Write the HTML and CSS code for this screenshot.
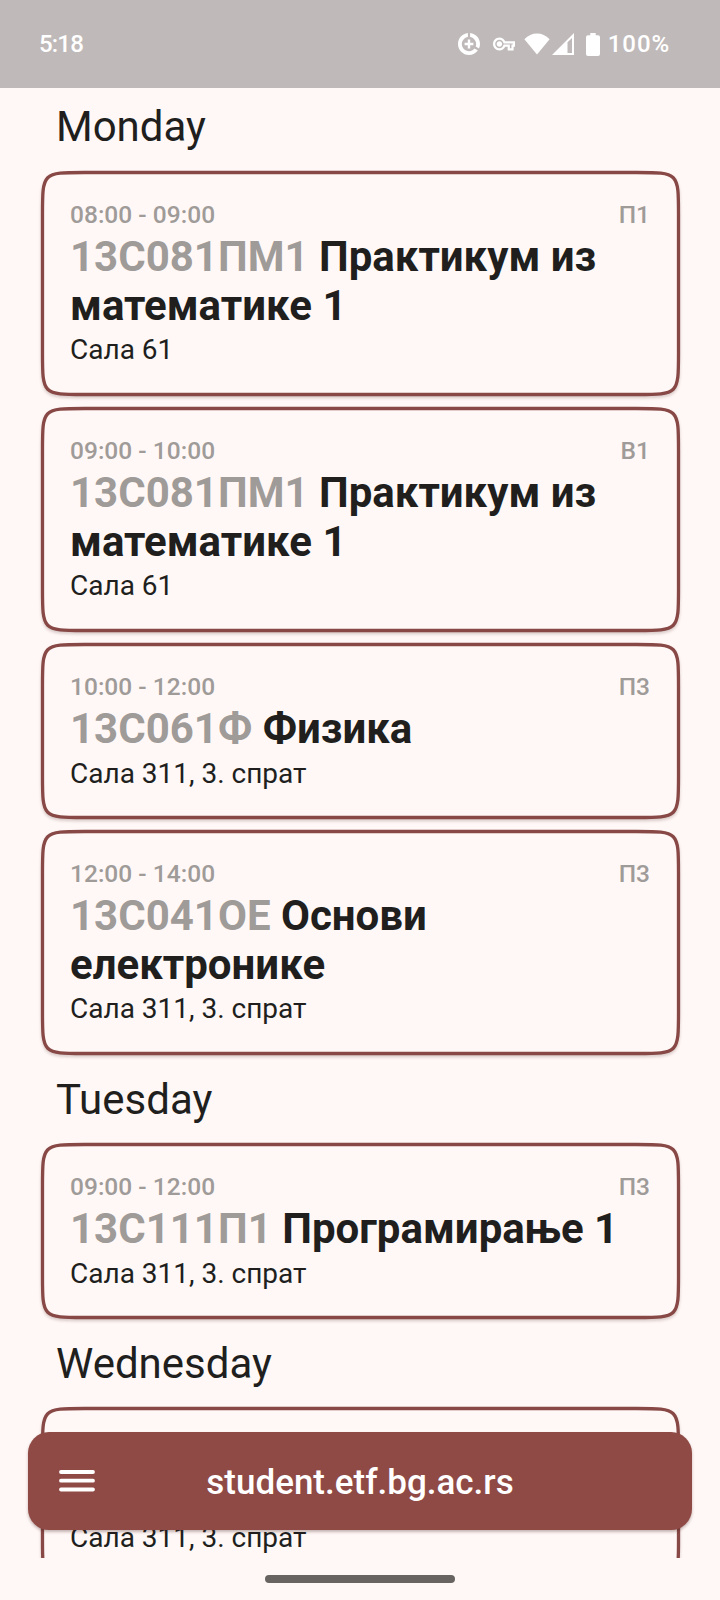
FILE: index.html
```html
<!DOCTYPE html>
<html lang="sr">
<head>
<meta charset="utf-8">
<title>student.etf.bg.ac.rs</title>
<link rel="stylesheet" href="styles.css">
</head>
<body>
<svg class="defs" aria-hidden="true">
  <symbol id="frame-tall" viewBox="0 0 639 225" overflow="visible">
    <path d="M1.5 43.5C1.5 1.5 1.5 1.5 43.5 1.5H595.5C637.5 1.5 637.5 1.5 637.5 43.5V181.5C637.5 223.5 637.5 223.5 595.5 223.5H43.5C1.5 223.5 1.5 223.5 1.5 181.5Z"/>
  </symbol>
  <symbol id="frame-short" viewBox="0 0 639 176" overflow="visible">
    <path d="M1.5 43.5C1.5 1.5 1.5 1.5 43.5 1.5H595.5C637.5 1.5 637.5 1.5 637.5 43.5V132.5C637.5 174.5 637.5 174.5 595.5 174.5H43.5C1.5 174.5 1.5 174.5 1.5 132.5Z"/>
  </symbol>
</svg>
<div class="screen">
  <header class="status">
    <span class="clock">5:18</span>
    <div class="indicators">
      <svg class="saver" viewBox="2 2 20 20"><path d="M13 2.05v3.53c3.1.49 5.5 3.19 5.5 6.42 0 .8-.15 1.6-.4 2.3l3 1.77c.58-1.24.9-2.62.9-4.07 0-5.18-3.95-9.45-9-9.95zM12 18.5c-3.6 0-6.5-2.9-6.5-6.5 0-3.23 2.4-5.93 5.5-6.42V2.05c-5.06.5-9 4.76-9 9.95 0 5.52 4.47 10 9.99 10 3.31 0 6.24-1.61 8.06-4.09l-3-1.77C15.87 17.58 14.1 18.5 12 18.5zM13.1 8h-2.2v2.9H8v2.2h2.9V16h2.2v-2.9H16v-2.2h-2.9z"/></svg>
      <svg class="key" viewBox="0 5 24 14"><path d="M22.5 19h-6.5v-4h-2.68c-1.14 2.42-3.6 4-6.32 4-3.86 0-7-3.14-7-7s3.14-7 7-7c2.72 0 5.17 1.58 6.32 4H24v6h-1.5zM18.4 16.6h1.7v-4h1.5v-1.2H11.6l-.3-.8C10.7 8.6 9 7.4 7 7.4c-2.5 0-4.6 2.1-4.6 4.6s2.1 4.6 4.6 4.6c2 0 3.7-1.2 4.3-3.2l.3-.8H18.4zM7 15c-1.65 0-3-1.35-3-3s1.35-3 3-3 3 1.35 3 3-1.35 3-3 3z" fill-rule="evenodd"/></svg>
      <svg class="wifi" viewBox="0 0 26 22"><path d="M13 21.5L.4 6.2C4 2.5 8.3.6 13 .6s9 1.9 12.6 5.6z"/></svg>
      <svg class="signal" viewBox="0 0 22 22"><path fill-rule="evenodd" d="M22 0V22H0zM15.5 9.2V20H20V5z"/></svg>
      <svg class="battery" viewBox="0 0 14 23"><path d="M4.3 0h5.4v2.2H12a2 2 0 0 1 2 2V21a2 2 0 0 1-2 2H2a2 2 0 0 1-2-2V4.2a2 2 0 0 1 2-2h2.3z"/></svg>
      <span class="percent">100%</span>
    </div>
  </header>

  <main class="schedule">
    <h2 class="day first">Monday</h2>
    <section class="list">
      <article class="card tall">
        <svg class="frame"><use href="#frame-tall"/></svg>
        <div class="meta"><span>08:00 - 09:00</span><span>П1</span></div>
        <h3 class="title"><span class="code">13С081ПМ1</span> Практикум из математике 1</h3>
        <p class="room">Сала 61</p>
      </article>
      <article class="card tall">
        <svg class="frame"><use href="#frame-tall"/></svg>
        <div class="meta"><span>09:00 - 10:00</span><span>В1</span></div>
        <h3 class="title"><span class="code">13С081ПМ1</span> Практикум из математике 1</h3>
        <p class="room">Сала 61</p>
      </article>
      <article class="card short">
        <svg class="frame"><use href="#frame-short"/></svg>
        <div class="meta"><span>10:00 - 12:00</span><span>П3</span></div>
        <h3 class="title"><span class="code">13С061Ф</span> Физика</h3>
        <p class="room">Сала 311, 3. спрат</p>
      </article>
      <article class="card tall">
        <svg class="frame"><use href="#frame-tall"/></svg>
        <div class="meta"><span>12:00 - 14:00</span><span>П3</span></div>
        <h3 class="title"><span class="code">13С041ОЕ</span> Основи електронике</h3>
        <p class="room">Сала 311, 3. спрат</p>
      </article>
    </section>

    <h2 class="day">Tuesday</h2>
    <section class="list">
      <article class="card short">
        <svg class="frame"><use href="#frame-short"/></svg>
        <div class="meta"><span>09:00 - 12:00</span><span>П3</span></div>
        <h3 class="title"><span class="code">13С111П1</span> Програмирање 1</h3>
        <p class="room">Сала 311, 3. спрат</p>
      </article>
    </section>

    <h2 class="day">Wednesday</h2>
    <section class="list">
      <article class="card short">
        <svg class="frame"><use href="#frame-short"/></svg>
        <div class="meta"></div>
        <h3 class="title"></h3>
        <p class="room">Сала 311, 3. спрат</p>
      </article>
    </section>
  </main>

  <nav class="appbar">
    <svg class="menu" viewBox="0 0 36 22"><path d="M2 2H34M2 10.7H34M2 19.5H34"/></svg>
    <span class="site">student.etf.bg.ac.rs</span>
  </nav>

  <footer class="gesture"><div class="pill"></div></footer>
</div>
</body>
</html>
```
FILE: styles.css
```css
* { box-sizing: border-box; }

body {
  margin: 0;
  background: #fff8f6;
  color: #201f1e;
  font-family: Roboto, "Noto Sans", sans-serif;
}

.defs { display: block; width: 0; height: 0; }

.screen {
  position: relative;
  display: flex;
  flex-direction: column;
  width: 720px;
  height: 1600px;
  overflow: hidden;
}

/* Status bar */
.status {
  flex: none;
  display: flex;
  align-items: center;
  justify-content: space-between;
  height: 88px;
  padding: 0 50px 0 39px;
  background: #bfbab9;
  color: #fff;
  font-size: 24px;
  font-weight: 500;
}

.clock { letter-spacing: -0.8px; }
.percent { letter-spacing: 0.9px; }

.indicators { display: flex; align-items: center; }
.indicators svg { fill: #fff; }
.saver { width: 22px; height: 22px; margin-right: 13px; }
.key { width: 22px; height: 14px; margin-right: 9px; }
.wifi { width: 26px; height: 22px; margin-right: 2px; }
.signal { width: 22px; height: 22px; margin-right: 12px; }
.battery { width: 14px; height: 23px; margin-right: 8px; }

/* Schedule */
.schedule {
  flex: none;
  height: 1470px;
  padding: 0 40px;
  overflow: hidden;
}

.day {
  height: 88px;
  margin: 0;
  padding: 20px 0 0 16px;
  font-size: 42px;
  font-weight: 400;
  line-height: 49px;
}

.day.first { height: 83px; padding-top: 14px; }

.list { display: flex; flex-direction: column; gap: 11px; }

.card {
  position: relative;
  padding: 28px 30px 0;
}

.card.tall { height: 225px; }
.card.short { height: 176px; }

.frame {
  position: absolute;
  left: 0.5px;
  top: 0;
  z-index: -1;
  width: 639px;
  height: 100%;
  overflow: visible;
  fill: #fff8f6;
  stroke: #884845;
  stroke-width: 3.3px;
  filter: drop-shadow(0 2px 1.5px rgba(60, 20, 20, 0.2));
}

.meta {
  display: flex;
  justify-content: space-between;
  height: 33px;
  color: #9f9b99;
  font-size: 24.5px;
  font-weight: 500;
  letter-spacing: 0.02px;
  line-height: 31px;
}

.title {
  min-height: 49px;
  margin: 0;
  font-size: 42px;
  font-weight: 700;
  line-height: 49px;
}

.code { color: #9f9b99; }

.room {
  margin: 0;
  font-size: 28px;
  line-height: 41px;
}

.tall .room { line-height: 40px; }

/* Floating bar */
.appbar {
  position: absolute;
  left: 28px;
  right: 28px;
  top: 1432px;
  display: grid;
  grid-template-columns: 36px 1fr 36px;
  align-items: center;
  height: 98px;
  padding: 0 31px;
  border-radius: 21px;
  background: #8f4a45;
  color: #fff;
  box-shadow: 0 2px 3px rgba(60, 20, 20, 0.3);
}

.menu {
  width: 36px;
  height: 22px;
  fill: none;
  stroke: #fff;
  stroke-width: 3.8px;
  stroke-linecap: round;
}

.site {
  padding-top: 3px;
  font-size: 35px;
  font-weight: 500;
  line-height: 41px;
  text-align: center;
}

/* Gesture handle */
.gesture {
  flex: 1;
  display: flex;
  justify-content: center;
  padding-top: 17px;
}

.pill {
  width: 190px;
  height: 8px;
  border-radius: 4px;
  background: #686462;
}
```
